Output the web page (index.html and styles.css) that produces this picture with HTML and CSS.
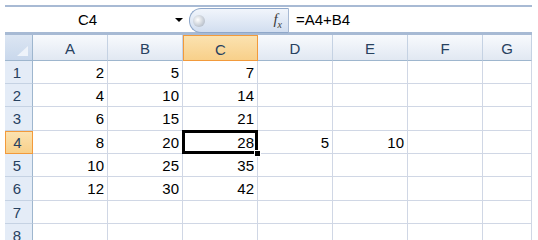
FILE: index.html
```html
<!DOCTYPE html>
<html lang="en">
<head>
  <meta charset="UTF-8">
  <meta name="viewport" content="width=device-width, initial-scale=1.0">
  <title>Sheet1</title>
  <link rel="stylesheet" href="styles.css">
</head>
<body>
  <div class="sheet">
    <div class="formula-bar">
      <div class="name-box">
        <span class="name">C4</span>
        <span class="arrow"></span>
      </div>
      <div class="fx-box">
        <span class="knob"></span>
        <span class="fx"><i>f</i><sub>x</sub></span>
      </div>
      <div class="formula">=A4+B4</div>
    </div>

    <div class="grid">
      <div class="corner"></div>
      <div class="hd">A</div>
      <div class="hd">B</div>
      <div class="hd sel">C</div>
      <div class="hd">D</div>
      <div class="hd">E</div>
      <div class="hd">F</div>
      <div class="hd">G</div>

      <div class="rh">1</div>
      <div class="c">2</div><div class="c">5</div><div class="c">7</div>
      <div class="c"></div><div class="c"></div><div class="c"></div><div class="c"></div>

      <div class="rh">2</div>
      <div class="c">4</div><div class="c">10</div><div class="c">14</div>
      <div class="c"></div><div class="c"></div><div class="c"></div><div class="c"></div>

      <div class="rh">3</div>
      <div class="c">6</div><div class="c">15</div><div class="c">21</div>
      <div class="c"></div><div class="c"></div><div class="c"></div><div class="c"></div>

      <div class="rh sel">4</div>
      <div class="c">8</div><div class="c">20</div><div class="c active">28</div>
      <div class="c">5</div><div class="c">10</div><div class="c"></div><div class="c"></div>

      <div class="rh">5</div>
      <div class="c">10</div><div class="c">25</div><div class="c">35</div>
      <div class="c"></div><div class="c"></div><div class="c"></div><div class="c"></div>

      <div class="rh">6</div>
      <div class="c">12</div><div class="c">30</div><div class="c">42</div>
      <div class="c"></div><div class="c"></div><div class="c"></div><div class="c"></div>

      <div class="rh">7</div>
      <div class="c"></div><div class="c"></div><div class="c"></div>
      <div class="c"></div><div class="c"></div><div class="c"></div><div class="c"></div>

      <div class="rh">8</div>
      <div class="c"></div><div class="c"></div><div class="c"></div>
      <div class="c"></div><div class="c"></div><div class="c"></div><div class="c"></div>
    </div>
  </div>
</body>
</html>
```

FILE: styles.css
```css
body {
  margin: 0;
  background: #fff;
  font-family: "Liberation Sans", Arial, sans-serif;
  font-size: 15px;
  color: #000;
  overflow: hidden;
}
.sheet {
  margin: 5px 0 0 5px;
  width: 527px;
}

/* formula bar */
.formula-bar {
  display: flex;
  height: 25px;
  border-top: 2px solid #a8bad4;
  border-bottom: 3px solid #a7bad4;
}
.name-box {
  width: 184px;
  display: flex;
  align-items: center;
}
.name {
  width: 165px;
  text-align: center;
}
.arrow {
  margin-left: 5px;
  border-left: 4px solid transparent;
  border-right: 4px solid transparent;
  border-top: 4px solid #000;
}
.fx-box {
  width: 98px;
  height: 23px;
  margin-top: 1px;
  border: 1px solid #8fa7c9;
  border-right-color: #a8bad4;
  border-radius: 12px 0 0 12px;
  background: linear-gradient(#f1f5fb, #d2def0);
  display: flex;
  align-items: center;
  justify-content: space-between;
}
.knob {
  width: 12px;
  height: 12px;
  margin-left: 3px;
  border-radius: 50%;
  background: radial-gradient(circle at 40% 40%, #fff, #b7bfca 75%, #8d96a3);
}
.fx {
  margin-right: 6px;
  font-family: "Liberation Serif", serif;
  font-size: 15px;
  color: #3b3b3b;
}
.fx sub {
  font-size: 10px;
  font-style: italic;
}
.formula {
  flex: 1;
  padding-left: 7px;
  display: flex;
  align-items: center;
}

/* grid */
.grid {
  display: grid;
  grid-template-columns: 28px repeat(6, 75px) 49px;
  grid-template-rows: 26px 23px 23px 24px 23px 23px 24px 23px 23px;
}
.corner {
  position: relative;
  border-right: 1px solid #9eb6ce;
  border-bottom: 1px solid #9eb6ce;
  background: linear-gradient(#dce6f3, #c9d8ec);
}
.corner::after {
  content: '';
  position: absolute;
  right: 4px;
  bottom: 4px;
  border-left: 11px solid transparent;
  border-bottom: 10px solid #eef3fa;
}
.hd {
  display: flex;
  align-items: center;
  justify-content: center;
  padding-top: 2px;
  border-right: 1px solid #c5d2e3;
  border-bottom: 1px solid #9eb6ce;
  background: linear-gradient(#f8fafd, #e1e8f2);
  color: #27415f;
}
.rh {
  display: flex;
  align-items: center;
  justify-content: center;
  padding-right: 3px;
  border-right: 1px solid #9eb6ce;
  border-bottom: 1px solid #c5d2e3;
  background: #e4ecf7;
  color: #27415f;
}
.hd.sel,
.rh.sel {
  background: linear-gradient(#fbe2b0, #f8d08a);
  border: 1px solid #f29a3b;
}
.c {
  display: flex;
  align-items: center;
  justify-content: flex-end;
  padding-right: 3px;
  border-right: 1px solid #d0d7e5;
  border-bottom: 1px solid #d0d7e5;
}
.active {
  position: relative;
}
.active::after {
  content: '';
  position: absolute;
  left: -1px;
  top: -1px;
  right: -1px;
  bottom: -1px;
  border: 3px solid #000;
}
.active::before {
  content: '';
  position: absolute;
  right: -4px;
  bottom: -4px;
  width: 5px;
  height: 5px;
  background: #000;
  border: 1px solid #fff;
  z-index: 1;
}
```
